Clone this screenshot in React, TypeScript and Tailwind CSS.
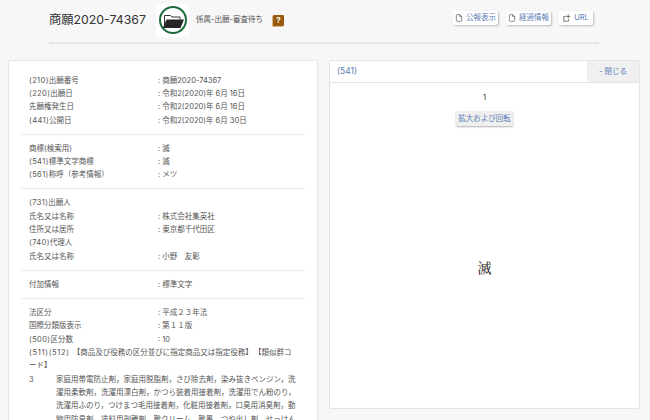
import React from "react";
import { File } from "lucide-react";

type Row = { label: string; value?: string };

const sections: Row[][] = [
  [
    { label: "(210)出願番号", value: "商願2020-74367" },
    { label: "(220)出願日", value: "令和2(2020)年 6月 16日" },
    { label: "先願権発生日", value: "令和2(2020)年 6月 16日" },
    { label: "(441)公開日", value: "令和2(2020)年 6月 30日" },
  ],
  [
    { label: "商標(検索用)", value: "滅" },
    { label: "(541)標準文字商標", value: "滅" },
    { label: "(561)称呼（参考情報）", value: "メツ" },
  ],
  [
    { label: "(731)出願人" },
    { label: "氏名又は名称", value: "株式会社集英社" },
    { label: "住所又は居所", value: "東京都千代田区" },
    { label: "(740)代理人" },
    { label: "氏名又は名称", value: "小野　友彰" },
  ],
  [{ label: "付加情報", value: "標準文字" }],
];

const lastRows: Row[] = [
  { label: "法区分", value: "平成２３年法" },
  { label: "国際分類版表示", value: "第１１版" },
  { label: "(500)区分数", value: "10" },
];

const goods =
  "家庭用帯電防止剤，家庭用脱脂剤，さび除去剤，染み抜きベンジン，洗濯用柔軟剤，洗濯用漂白剤，かつら装着用接着剤，洗濯用でん粉のり，洗濯用ふのり，つけまつ毛用接着剤，化粧用接着剤，口臭用消臭剤，動物用防臭剤，塗料用剥離剤，靴クリーム，靴墨，つや出し剤，せっけん類";

// the (210) style codes run a bit wider than the kana next to them
const Label = ({ text }: { text: string }) => {
  const code = text.match(/^\(\d+\)/)?.[0];
  if (!code) return <>{text}</>;
  return (
    <>
      <span className="tracking-[0.4px]">{code}</span>
      {text.slice(code.length)}
    </>
  );
};

const InfoRow = ({ label, value }: Row) => (
  <div className="flex h-[13.4px] items-center pt-[1px]">
    <div className="w-[129px] shrink-0 whitespace-nowrap">
      <Label text={label} />
    </div>
    {value && <div className="whitespace-nowrap">: {value}</div>}
  </div>
);

const HeaderLink = ({ label, url, width }: { label: string; url?: boolean; width: string }) => (
  <a
    className={`flex h-[14px] items-center justify-center gap-[3px] rounded-[2px] bg-white text-[7.5px] text-[#5b7db5] shadow-[1px_1px_2px_rgba(0,0,0,0.25)] ${width}`}
  >
    {url ? (
      <svg viewBox="0 0 10 10" className="size-[8px] text-[#555]" fill="none" stroke="currentColor" strokeWidth="1">
        <path d="M3.5 3H1v6h6V6.5" />
        <path d="M6.5 0.5v5M4 3h5" />
      </svg>
    ) : (
      <File className="size-[8px] text-[#555]" strokeWidth={2} />
    )}
    {label}
  </a>
);

export default function App() {
  return (
    <div
      className="h-[420px] w-[650px] overflow-hidden bg-[#f7f7f7] text-[7.5px] text-[#555]"
      style={{ fontFamily: 'Inter, "Noto Sans CJK JP", sans-serif' }}
    >
      <header className="ml-[49px] mr-[51px] flex h-[44px] items-center border-b-2 border-[#e6e6e6] pb-[2px]">
        <h1 className="w-[107px] whitespace-nowrap text-[12.3px] text-[#333]">商願2020-74367</h1>
        <div className="flex size-[33px] items-center justify-center bg-white">
          <div className="flex size-[28px] items-center justify-center rounded-full border-2 border-[#1e6b3c]">
            <svg viewBox="0 0 22 15" className="h-[15px] w-[22px]">
              <path d="M2.5 13V2.5h6l1.5 1.5h8v2.5" fill="none" stroke="#333" strokeWidth="1" />
              <path d="M4.5 6.5H22L18.5 15H0.8Z" fill="#262626" />
            </svg>
          </div>
        </div>
        <span className="ml-[7px] whitespace-nowrap text-[#555]">係属-出願-審査待ち</span>
        <span className="ml-[10px] flex size-[11px] items-center justify-center rounded-[1px] bg-[#9a5a10] text-[8px] font-bold text-white shadow-[-1px_1px_0_#d9b98c]">
          ?
        </span>
        <div className="ml-auto mr-[6px] flex gap-[8px] pb-[5px]">
          <HeaderLink label="公報表示" width="w-[45px]" />
          <HeaderLink label="経過情報" width="w-[45px]" />
          <HeaderLink url label="URL" width="w-[34px]" />
        </div>
      </header>

      <main className="mt-[16px] flex items-start gap-[11px] pl-[8px] pr-[10px]">
        <section className="w-[310px] shrink-0 rounded-[2px] border border-[#e8e8e8] bg-white px-[12px] pt-[12px] shadow-[0_1px_2px_rgba(0,0,0,0.06)]">
          {sections.map((rows, i) => (
            <div key={i} className="border-b border-[#ececec] pb-[7px] pt-[6.5px] first:pt-0">
              <div className="pl-[8px]">
                {rows.map((row, j) => (
                  <InfoRow key={j} {...row} />
                ))}
              </div>
            </div>
          ))}
          <div className="pl-[8px] pr-[8px] pt-[7px] leading-[13.4px]">
            {lastRows.map((row, j) => (
              <InfoRow key={j} {...row} />
            ))}
            <p>
              <span className="mr-[3px] tracking-[0.7px]">(511)(512)</span>
              <span className="mr-[5px]">【商品及び役務の区分並びに指定商品又は指定役務】</span>
              【類似群コード】
            </p>
            <div className="flex">
              <div className="w-[27px] shrink-0">3</div>
              <p>{goods}</p>
            </div>
          </div>
        </section>

        <section className="h-[349px] w-[311px] shrink-0 rounded-[2px] border border-[#e4e4e4] bg-white">
          <div className="flex h-[22px] border-b border-[#e4e4e4] text-[#5b7db5]">
            <div className="flex flex-1 items-center pl-[7px] text-[8.5px]">(541)</div>
            <div className="flex w-[52px] items-center justify-center bg-[#f0f0f0]">- 閉じる</div>
          </div>
          <div className="flex h-[326px] flex-col items-center pt-[9px]">
            <div className="text-[#333]">1</div>
            <button className="mt-[8px] h-[15px] w-[57px] whitespace-nowrap rounded-[2px] bg-[#efefef] text-[#5b7db5] shadow-[0_1px_2px_rgba(0,0,0,0.3)]">
              拡大および回転
            </button>
            <div
              className="mt-[131px] text-[14px] text-[#222]"
              style={{ fontFamily: '"Noto Serif CJK JP", "Liberation Serif", "Noto Sans CJK JP", serif' }}
            >
              滅
            </div>
          </div>
        </section>
      </main>
    </div>
  );
}
